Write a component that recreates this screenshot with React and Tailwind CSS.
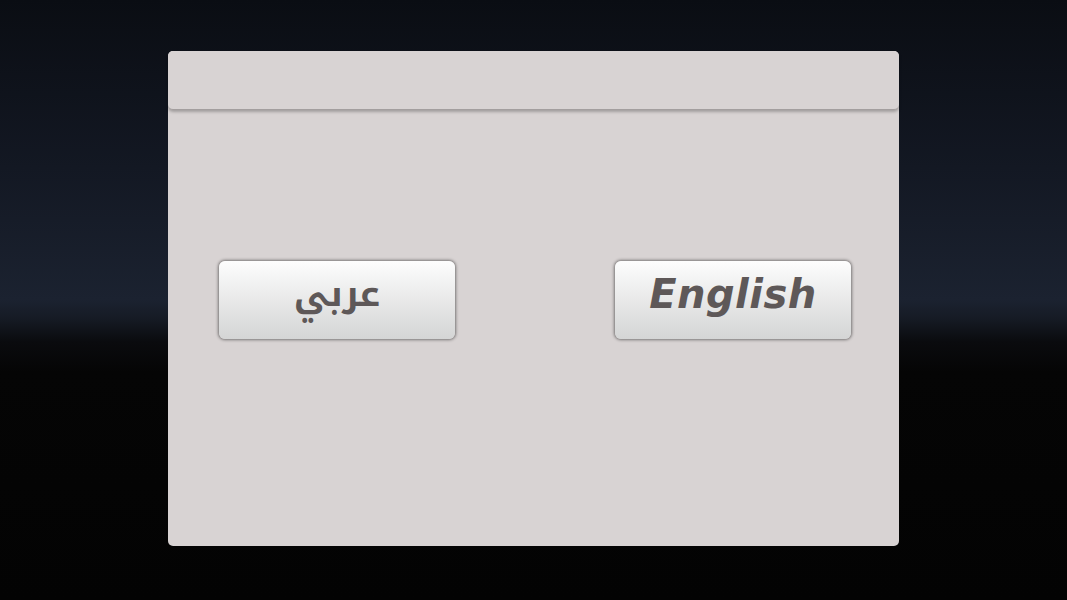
export default function App() {
  return (
    <div className="min-h-[600px] h-screen w-full bg-[linear-gradient(to_bottom,#0a0d13_0%,#131823_28%,#1b2230_50%,#161b25_53%,#0a0b0e_57%,#050505_62%,#030303_100%)] pt-[51px]">
      {/* panel */}
      <div className="mx-auto w-[731px] h-[495px] rounded-[5px] bg-[#d8d3d3] flex flex-col">
        <div className="h-[59px] rounded-[5px] bg-[#d8d3d3] border-b border-[#a39e9e] shadow-[0_2px_3px_rgba(0,0,0,0.25)]" />
        <div className="flex justify-between pl-[51px] pr-[48px] pt-[151px]">
          <LangButton>
            <span
              dir="rtl"
              className="text-[36px] font-bold text-[#5e5858] leading-none"
              style={{ fontFamily: '"Noto Kufi Arabic", "Noto Sans Arabic", "DejaVu Sans", sans-serif' }}
            >
              عربي
            </span>
          </LangButton>
          <LangButton>
            <span
              className="text-[40px] font-bold italic text-[#5e5858] leading-none tracking-[0.5px]"
              style={{ fontFamily: '"DejaVu Sans", sans-serif' }}
            >
              English
            </span>
          </LangButton>
        </div>
      </div>
    </div>
  )
}

function LangButton({ children }) {
  return (
    <button className="w-[236px] h-[78px] rounded-[6px] bg-[linear-gradient(to_bottom,#fdfdfd,#d4d5d5)] shadow-[0_0_3px_1px_rgba(0,0,0,0.45)] flex items-center justify-center pb-[12px]">
      {children}
    </button>
  )
}
